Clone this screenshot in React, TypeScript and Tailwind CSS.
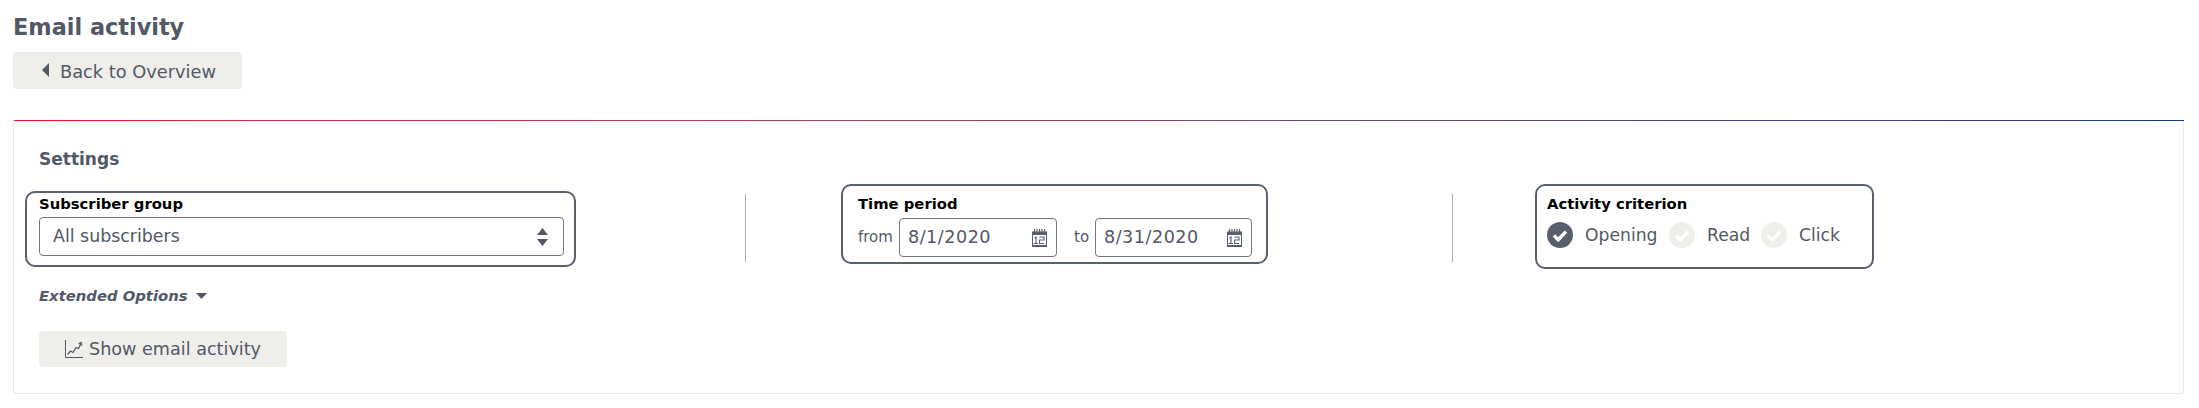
const font = { fontFamily: '"DejaVu Sans", Verdana, sans-serif' };

function CheckCircle({ on }: { on: boolean }) {
  return (
    <svg width="26" height="26" viewBox="0 0 26 26" className="shrink-0">
      <circle cx="13" cy="13" r="13" fill={on ? "#5a5f6e" : "#efeeea"} />
      <path d="M7 13.5l4.2 4.2L19 9.6" fill="none" stroke="#fff" strokeWidth="3.4" />
    </svg>
  );
}

function CalendarIcon() {
  return (
    <svg width="15" height="18" viewBox="0 0 15 18" className="shrink-0">
      <path d="M2.5 0v3M5 0v3M7.5 0v3M10 0v3M12.5 0v3" stroke="#5a5f6e" strokeWidth="1.2" />
      <path d="M0 2.5h15V6H0z" fill="#5a5f6e" />
      <rect x="0.5" y="5.5" width="14" height="12" fill="#fff" stroke="#5a5f6e" />
      <path d="M2.5 9L4 8v6M1.5 14.500H6M7.5 8H12v3H7.5v3.500H12M1 16.500h13" fill="none" stroke="#5a5f6e" strokeWidth="1.1" />
    </svg>
  );
}

function DateInput({ value, width }: { value: string; width: string }) {
  return (
    <div className={`flex h-[39px] items-center justify-between rounded-[4px] border border-[#75757c] pl-[8px] pr-[9px] text-[17.6px] tracking-[0.5px] ${width}`}>
      <span>{value}</span>
      <CalendarIcon />
    </div>
  );
}

export default function App() {
  return (
    <div style={font} className="h-[408px] w-[2199px] overflow-hidden bg-white text-[#525866]">
      <div className="pl-[13px] pr-[15px]">
        <h1 className="pt-[12px] text-[22.4px] font-bold leading-[30px]">Email activity</h1>
        <button className="mt-[10px] flex h-[37px] w-[229px] items-center justify-center gap-[10px] rounded-[4px] bg-[#efeeea] pl-[2px] pt-[3px] text-[17.8px]">
          <svg width="9" height="14" viewBox="0 0 9 14" className="mb-[5px]">
            <path d="M8 0v14L1 7z" fill="#525866" />
          </svg>
          Back to Overview
        </button>

        <div className="relative mt-[31px] h-[274px] rounded-b-[4px] border-x border-b border-[#e8e8e8]">
          <div className="absolute left-0 right-[-1px] top-0 h-px bg-linear-to-r from-[#ea112c] to-[#0f3b85]" />
          <div className="pl-[11px]">
            <h2 className="pl-[14px] pt-[27px] text-[17px] font-bold leading-[24px]">Settings</h2>
            <div className="flex items-start">
              <div className="mt-[20px] h-[76px] w-[551px] rounded-[10px] border-2 border-[#5a5f6e] pl-[12px] pr-[10px]">
                <div className="pt-[1px] text-[14.8px] font-bold leading-[20px] text-black">Subscriber group</div>
                <div className="mt-[3px] flex h-[39px] items-center justify-between rounded-[4px] border border-[#75757c] pl-[13px] pr-[15px] text-[17.4px]">
                  <span>All subscribers</span>
                  <svg width="11" height="18" viewBox="0 0 11 18">
                    <path d="M5.5 0L11 7H0zM5.5 18L0 11h11z" fill="#525866" />
                  </svg>
                </div>
              </div>
              <div className="ml-[169px] mt-[23px] h-[68px] w-px bg-[#a9adb4]" />
              <div className="ml-[95px] mt-[13px] h-[80px] w-[427px] rounded-[10px] border-2 border-[#5a5f6e] pl-[15px]">
                <div className="pt-[8px] text-[14.8px] font-bold leading-[20px] text-black">Time period</div>
                <div className="mt-[4px] flex items-center text-[15px]">
                  <span className="w-[41px]">from</span>
                  <DateInput value="8/1/2020" width="w-[158px]" />
                  <span className="ml-[17px] w-[21px]">to</span>
                  <DateInput value="8/31/2020" width="w-[157px]" />
                </div>
              </div>
              <div className="ml-[184px] mt-[23px] h-[68px] w-px bg-[#a9adb4]" />
              <div className="ml-[82px] mt-[13px] h-[85px] w-[339px] rounded-[10px] border-2 border-[#5a5f6e] pl-[10px]">
                <div className="pt-[8px] text-[14.8px] font-bold leading-[20px] text-black">Activity criterion</div>
                <div className="mt-[7px] flex items-center text-[17.2px]">
                  <CheckCircle on />
                  <span className="ml-[12px] w-[84px] pt-[2px]">Opening</span>
                  <CheckCircle on={false} />
                  <span className="ml-[12px] w-[54px] pt-[2px]">Read</span>
                  <CheckCircle on={false} />
                  <span className="ml-[12px] pt-[2px]">Click</span>
                </div>
              </div>
            </div>
            <div className="mt-[17px] flex items-center gap-[8px] pl-[14px] text-[14.8px] font-bold italic leading-[20px]">
              Extended Options
              <svg width="11" height="6" viewBox="0 0 11 6">
                <path d="M0 0h11L5.5 6z" fill="#525866" />
              </svg>
            </div>
            <div className="pl-[14px]">
              <button className="mt-[25px] flex h-[36px] w-[248px] items-center justify-center gap-[6px] rounded-[4px] bg-[#efeeea] text-[17.6px]">
                <svg width="18" height="18" viewBox="0 0 18 18" fill="none" stroke="#525866">
                  <path d="M.5 0v17.500H18" />
                  <path d="M2.500 14.500l3-3.500 2.500 1.500 3-5 2.500 1 2-4" strokeWidth="1.2" />
                  <path d="M13.500 3.500L16.500 2l.5 3.500z" fill="#525866" strokeWidth="0.6" />
                </svg>
                Show email activity
              </button>
            </div>
          </div>
        </div>
      </div>
    </div>
  );
}
